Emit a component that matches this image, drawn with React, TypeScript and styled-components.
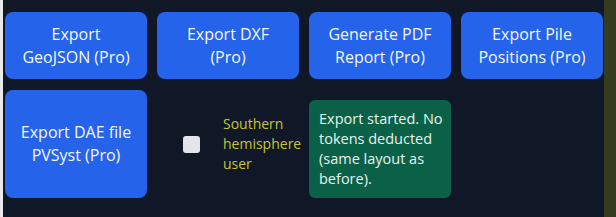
import styled, { createGlobalStyle } from 'styled-components';

const GlobalStyle = createGlobalStyle`
  html, body {
    margin:0;
    padding:0;
    background-color:#101727;
  }
  body {
    font-family:"Open Sans", "Noto Sans", sans-serif;
  }
`

const Page = styled.div`
  display:flex;
  width:616px;
  height:217px;
  background-color:#101727;
`
const LeftEdge = styled.div`
  width:3px;
  background-color:#e9eaec;
`
const RightEdge = styled.div`
  width:12px;
  background-color:#343c1d;
`
const Panel = styled.div`
  flex:1;
  display:grid;
  grid-template-columns:repeat(4, 142px);
  grid-template-rows:67px 108px;
  column-gap:10px;
  row-gap:11px;
  padding:12px 0px 0px 2px;
  align-content:start;
`
const ActionButton = styled.button`
  display:flex;
  align-items:center;
  justify-content:center;
  border:none;
  border-radius:8px;
  background-color:#2563eb;
  color:#f4f7ff;
  font-family:"Open Sans", "Noto Sans", sans-serif;
  font-size:16px;
  line-height:23px;
  text-align:center;
  padding:0px 6px;
  cursor:pointer;
`
const CheckCell = styled.label`
  display:flex;
  align-items:center;
  padding-left:26px;
  gap:23px;
`
const CheckBox = styled.span`
  width:17px;
  height:17px;
  border-radius:3px;
  background-color:#e4e5e8;
  flex-shrink:0;
`
const CheckText = styled.span`
  width:80px;
  color:#c5c636;
  font-size:14px;
  line-height:20px;
`
const Notice = styled.div`
  margin-top:10px;
  border-radius:6px;
  background-color:#0b6048;
  color:#e8f3ee;
  font-size:14.5px;
  line-height:20px;
  padding:9px 8px 0px 10px;
`

export default function App() {
  return (
    <>
      <GlobalStyle />
      <Page>
        <LeftEdge />
        <Panel>
          <ActionButton>Export<br />GeoJSON (Pro)</ActionButton>
          <ActionButton>Export DXF<br />(Pro)</ActionButton>
          <ActionButton>Generate PDF<br />Report (Pro)</ActionButton>
          <ActionButton>Export Pile<br />Positions (Pro)</ActionButton>
          <ActionButton>Export DAE file<br />PVSyst (Pro)</ActionButton>
          <CheckCell>
            <CheckBox />
            <CheckText>Southern hemisphere user</CheckText>
          </CheckCell>
          <Notice>Export started. No tokens deducted (same layout as before).</Notice>
        </Panel>
        <RightEdge />
      </Page>
    </>
  )
}
